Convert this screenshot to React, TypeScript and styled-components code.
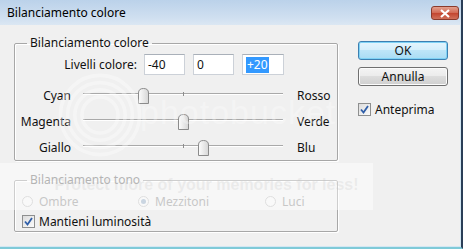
import React from "react";
import styled, { createGlobalStyle } from "styled-components";

const GlobalStyle = createGlobalStyle`
  html, body {
    margin: 0;
    padding: 0;
    background: #f0f0f0;
  }
  body {
    font-family: "Noto Sans", "Liberation Sans", sans-serif;
    font-size: 12px;
    color: #111;
  }
`;

type SliderProps = {
  left: string;
  right: string;
  value: number;
};

const Slider: React.FC<SliderProps> = ({ left, right, value }) => (
  <SliderRow>
    <SideLabel>{left}</SideLabel>
    <Track>
      <Tick />
      <Thumb viewBox="0 0 11 16" style={{ left: 100 + value - 5.5 }}>
        <defs>
          <linearGradient id="thumbFill" x1="0" y1="0" x2="1" y2="0">
            <stop offset="0" stopColor="#fdfdfd" />
            <stop offset="1" stopColor="#d6d6d6" />
          </linearGradient>
        </defs>
        <path
          d="M0.5 15.5 V5 Q0.5 0.5 5.5 0.5 Q10.5 0.5 10.5 5 V15.5 Z"
          fill="url(#thumbFill)"
          stroke="#8b8b8b"
        />
      </Thumb>
    </Track>
    <EndLabel>{right}</EndLabel>
  </SliderRow>
);

const CheckMark = () => (
  <CheckBox>
    <svg width="9" height="9" viewBox="0 0 9 9">
      <path d="M1 4.5 L3.5 7.5 L8 1" fill="none" stroke="#2f5ea8" strokeWidth="1.8" />
    </svg>
  </CheckBox>
);

const App: React.FC = () => (
  <>
    <GlobalStyle />
    <Window>
      <TitleBar>
        <Title>Bilanciamento colore</Title>
        <CloseButton>
          <svg width="12" height="9" viewBox="0 0 12 9">
            <path d="M2 1 L10 8 M10 1 L2 8" stroke="#fff" strokeWidth="2.2" />
          </svg>
        </CloseButton>
      </TitleBar>
      <Body>
        <LeftColumn>
          <Group>
            <Legend>Bilanciamento colore</Legend>
            <GroupContent>
              <LevelsRow>
                <LevelsLabel>Livelli colore:</LevelsLabel>
                <Field>-40</Field>
                <Field>0</Field>
                <Field $wide>
                  <Selected>+20</Selected>
                </Field>
              </LevelsRow>
              <Slider left="Cyan" right="Rosso" value={-40} />
              <Slider left="Magenta" right="Verde" value={0} />
              <Slider left="Giallo" right="Blu" value={20} />
            </GroupContent>
          </Group>
          <ToneGroup>
            <Legend $disabled>Bilanciamento tono</Legend>
            <ToneContent>
              <RadioRow>
                <RadioOption>
                  <Radio />
                  Ombre
                </RadioOption>
                <RadioOption>
                  <Radio $checked />
                  Mezzitoni
                </RadioOption>
                <RadioOption>
                  <Radio />
                  Luci
                </RadioOption>
              </RadioRow>
              <CheckRow>
                <CheckMark />
                Mantieni luminosità
              </CheckRow>
            </ToneContent>
          </ToneGroup>
        </LeftColumn>
        <RightColumn>
          <Button $primary>OK</Button>
          <Button>Annulla</Button>
          <PreviewRow>
            <CheckMark />
            Anteprima
          </PreviewRow>
        </RightColumn>
      </Body>

      {/* photobucket watermark lying over the dialog */}
      <LogoMark viewBox="0 0 100 100">
        <circle cx="50" cy="50" r="44" />
        <circle cx="50" cy="50" r="36" />
        <circle cx="50" cy="50" r="28" />
        <circle cx="50" cy="50" r="20" />
      </LogoMark>
      <LogoText>photobucket</LogoText>
      <Band>
        <BandText>Protect more of your memories for less!</BandText>
      </Band>
    </Window>
  </>
);

export default App;

const Window = styled.div`
  position: relative;
  width: 463px;
  height: 249px;
  box-sizing: border-box;
  display: flex;
  flex-direction: column;
  background: #f0f0f0;
  border-right: 2px solid #2a3e57;
  border-bottom: 2px solid #7fcad8;
  box-shadow: inset -1px 0 0 #d3e7f3, inset 0 -1px 0 #d3e7f3;
  overflow: hidden;
`;

const TitleBar = styled.div`
  height: 25px;
  flex: none;
  display: flex;
  align-items: center;
  justify-content: space-between;
  padding: 0 2px 0 7px;
  background: linear-gradient(#bbd2ea, #cfdff0 70%, #dbe7f3);
`;

const Title = styled.span`
  font-size: 12px;
  color: #000;
`;

const CloseButton = styled.div`
  width: 28px;
  height: 14px;
  box-sizing: border-box;
  margin-top: 1px;
  display: flex;
  align-items: center;
  justify-content: center;
  border: 1px solid #8a3a2c;
  border-radius: 3px;
  background: linear-gradient(#e3a08e, #d26a55 48%, #c3452f 52%, #d0705a);
`;

const Body = styled.div`
  display: flex;
  gap: 20px;
  padding: 10px 0 0 14px;
`;

const LeftColumn = styled.div`
  width: 324px;
  display: flex;
  flex-direction: column;
`;

const Group = styled.fieldset`
  margin: 0;
  padding: 0;
  min-inline-size: 0;
  border: 1px solid #a7a7a7;
  border-radius: 2px;
  box-shadow: 1px 1px 0 #fff, inset 1px 1px 0 #fff;
`;

const ToneGroup = styled(Group)`
  margin-top: 11px;
`;

const Legend = styled.legend<{ $disabled?: boolean }>`
  margin-left: 12px;
  padding: 0 3px;
  line-height: 16px;
  color: ${({ $disabled }) => ($disabled ? "#777" : "#111")};
`;

const GroupContent = styled.div`
  padding: 3px 0 2px 0;
`;

const LevelsRow = styled.div`
  display: flex;
  align-items: center;
  height: 21px;
  margin-bottom: 5px;
`;

const LevelsLabel = styled.span`
  width: 122px;
  margin-right: 7px;
  text-align: right;
`;

const Field = styled.div<{ $wide?: boolean }>`
  width: ${({ $wide }) => ($wide ? 42 : 41)}px;
  height: 21px;
  box-sizing: border-box;
  margin-right: ${({ $wide }) => ($wide ? 0 : 8)}px;
  padding-left: 3px;
  display: flex;
  align-items: center;
  background: #fff;
  border: 1px solid #ccd1d8;
  border-top-color: #a9b0b9;
`;

const Selected = styled.span`
  background: #3399ff;
  color: #fff;
  line-height: 16px;
  padding: 0 1px;
`;

const SliderRow = styled.div`
  display: flex;
  align-items: center;
  height: 26px;
`;

const SideLabel = styled.span`
  width: 56px;
  text-align: right;
  margin-top: 4px;
`;

const EndLabel = styled.span`
  margin-left: 14px;
  margin-top: 4px;
`;

const Track = styled.div`
  position: relative;
  width: 200px;
  height: 1px;
  margin-left: 12px;
  background: #a9a9a9;
  box-shadow: 0 1px 0 #fff;
`;

const Tick = styled.div`
  position: absolute;
  left: 100px;
  top: -1px;
  width: 1px;
  height: 4px;
  background: #8c8c8c;
`;

const Thumb = styled.svg`
  position: absolute;
  top: -5px;
  width: 11px;
  height: 16px;
`;

const ToneContent = styled.div`
  padding: 3px 0 0 7px;
`;

const RadioRow = styled.div`
  display: grid;
  grid-template-columns: 116px 127px auto;
  height: 20px;
  align-items: center;
`;

const RadioOption = styled.span`
  display: flex;
  align-items: center;
  gap: 6px;
  color: #9a9a9a;
`;

const Radio = styled.span<{ $checked?: boolean }>`
  position: relative;
  width: 11px;
  height: 11px;
  box-sizing: border-box;
  border-radius: 50%;
  border: 1px solid #c4c4c4;
  background: #f4f4f4;

  &::after {
    content: "";
    display: ${({ $checked }) => ($checked ? "block" : "none")};
    position: absolute;
    left: 2px;
    top: 2px;
    width: 5px;
    height: 5px;
    border-radius: 50%;
    background: #9fb3c8;
  }
`;

const CheckRow = styled.div`
  display: flex;
  align-items: center;
  gap: 4px;
  height: 20px;
`;

const CheckBox = styled.span`
  width: 13px;
  height: 13px;
  box-sizing: border-box;
  display: flex;
  align-items: center;
  justify-content: center;
  border: 1px solid #8e8f8f;
  background: linear-gradient(135deg, #dcdcdc, #fbfbfb);
`;

const RightColumn = styled.div`
  width: 90px;
  padding-top: 6px;
  display: flex;
  flex-direction: column;
  gap: 7px;
`;

const Button = styled.div<{ $primary?: boolean }>`
  height: 19px;
  box-sizing: border-box;
  display: flex;
  align-items: center;
  justify-content: center;
  border-radius: 3px;
  border: 1px solid ${({ $primary }) => ($primary ? "#3c7fb1" : "#707070")};
  background: ${({ $primary }) =>
    $primary
      ? "linear-gradient(#e5f5fd, #d3eefb 50%, #bde5f8 50%, #a9dcf4)"
      : "linear-gradient(#f4f4f4, #ebebeb 50%, #dddddd 50%, #cfcfcf)"};
  box-shadow: inset 0 0 0 1px
    ${({ $primary }) => ($primary ? "#7fd2f5" : "#fcfcfc")};
`;

const PreviewRow = styled(CheckRow)`
  margin-top: 8px;
  height: 16px;
`;

const LogoMark = styled.svg`
  position: absolute;
  left: 55px;
  top: 70px;
  width: 90px;
  height: 90px;
  fill: none;
  stroke: rgba(255, 255, 255, 0.35);
  stroke-width: 4;
  pointer-events: none;
`;

const LogoText = styled.div`
  position: absolute;
  left: 140px;
  top: 93px;
  font-family: "Liberation Sans", sans-serif;
  font-size: 34px;
  letter-spacing: 1px;
  color: rgba(255, 255, 255, 0.3);
  pointer-events: none;
`;

const Band = styled.div`
  position: absolute;
  left: 0;
  top: 163px;
  width: 373px;
  height: 47px;
  display: flex;
  align-items: center;
  justify-content: center;
  background: rgba(255, 255, 255, 0.45);
  pointer-events: none;
`;

const BandText = styled.span`
  margin: 0 0 3px 40px;
  font-family: "Liberation Sans", sans-serif;
  font-weight: bold;
  font-size: 16px;
  color: rgba(190, 190, 190, 0.22);
`;
